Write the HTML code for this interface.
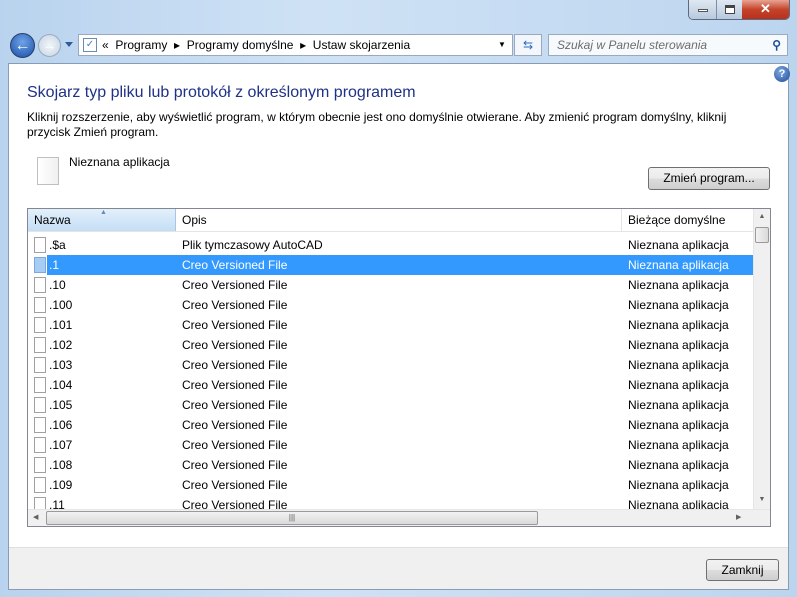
<!DOCTYPE html><html><head><meta charset="utf-8"><style>
*{margin:0;padding:0;box-sizing:border-box}
body{width:797px;height:597px;overflow:hidden;font-family:"Liberation Sans",sans-serif;font-size:12px;color:#000;background:linear-gradient(90deg,#b9d3ee,#cfe2f5 40%,#bcd5ef);position:relative}
.a{position:absolute}
.content{left:8px;top:63px;width:781px;height:527px;background:#fff;border:1px solid #8a9cb4}
.foot{left:9px;top:547px;width:779px;height:42px;background:#f0f0f0;border-top:1px solid #dfdfdf}
.btn{border:1px solid #707070;border-radius:3px;background:linear-gradient(#f2f2f2,#ebebeb 50%,#dddddd 51%,#cfcfcf);text-align:center;line-height:21px}
.row{position:absolute;left:28px;width:725px;height:20px;line-height:20px}
.row span{position:absolute}
.ic{position:absolute;left:6px;top:2px;width:12px;height:16px;border:1px solid #a0a0a0;background:#fff}
.sel{background:#3399ff;color:#fff}
</style></head><body>
<div class="a" style="left:688px;top:0;width:102px;height:20px;border:1px solid #5a6b80;border-top:none;border-radius:0 0 5px 5px;overflow:hidden;display:flex">
<div style="width:27px;background:linear-gradient(#dfe8f3,#b8c9dd)"><div style="margin:9px auto 0;width:10px;height:3px;background:#fff;border:1px solid #555"></div></div>
<div style="width:26px;background:linear-gradient(#dfe8f3,#b8c9dd);border-left:1px solid #7d8da3"><div style="margin:5px auto 0;width:10px;height:9px;border:1px solid #444;border-top-width:3px;background:#fff"></div></div>
<div style="flex:1;background:linear-gradient(#e8a493,#c4432a 50%,#b8301c);color:#fff;font-weight:bold;text-align:center;font-size:13px;line-height:18px">✕</div></div>
<div class="a" style="left:10px;top:33px;width:25px;height:25px;border-radius:50%;background:radial-gradient(circle at 50% 35%,#6ea4e8,#1a4da8);border:1px solid #2a3f6a;color:#fff;font-weight:bold;text-align:center;line-height:23px;font-size:16px">←</div>
<div class="a" style="left:38px;top:34px;width:23px;height:23px;border-radius:50%;background:radial-gradient(#f2f6fa,#c5d3e2);border:1px solid #9aaac0;color:#fff;text-align:center;line-height:21px;font-size:14px">→</div>
<div class="a" style="left:65px;top:42px;width:0;height:0;border:4px solid transparent;border-top:5px solid #2c5c9a"></div>
<div class="a" style="left:78px;top:34px;width:435px;height:22px;background:#fff;border:1px solid #9aa9bd;line-height:20px;font-size:12px">
<span class="a" style="left:4px;top:3px;width:14px;height:14px;border:1px solid #6b8bb0;color:#3a7fd0;font-size:10px;line-height:12px;text-align:center">✓</span>
<span class="a" style="left:23px">«&nbsp; Programy &nbsp;▸&nbsp; Programy domyślne &nbsp;▸&nbsp; Ustaw skojarzenia</span>
<span class="a" style="left:413px;top:0;width:20px;text-align:center;font-size:8px">▼</span></div>
<div class="a" style="left:514px;top:34px;width:28px;height:22px;background:#f3f7fb;border:1px solid #9aa9bd;color:#2a6bc2;text-align:center;line-height:20px;font-size:12px">⇆</div>
<div class="a" style="left:548px;top:34px;width:240px;height:22px;background:#f7fafd;border:1px solid #9aa9bd;line-height:20px;padding-left:8px;color:#6d6d6d;font-style:italic">Szukaj w Panelu sterowania<span class="a" style="right:6px;top:0;color:#1a4f9a;font-style:normal;font-weight:bold">⚲</span></div>
<div class="content a"></div>
<div class="a" style="left:774px;top:66px;width:16px;height:16px;border-radius:50%;background:radial-gradient(circle at 40% 35%,#7fa9e0,#1f4a98);color:#fff;font-weight:bold;font-size:11px;text-align:center;line-height:16px">?</div>
<div class="a" style="left:27px;top:84px;font-size:16px;color:#1e3287">Skojarz typ pliku lub protokół z określonym programem</div>
<div class="a" style="left:27px;top:110px;width:720px;line-height:15px;color:#000">Kliknij rozszerzenie, aby wyświetlić program, w którym obecnie jest ono domyślnie otwierane. Aby zmienić program domyślny, kliknij przycisk Zmień program.</div>
<div class="a" style="left:37px;top:157px;width:22px;height:28px;border:1px solid #c0c0c0;background:linear-gradient(90deg,#fff,#f0f0f0)"></div>
<div class="a" style="left:69px;top:155px">Nieznana aplikacja</div>
<div class="a btn" style="left:648px;top:167px;width:122px;height:23px">Zmień program...</div>
<div class="a" style="left:27px;top:208px;width:744px;height:319px;border:1px solid #828790;background:#fff;overflow:hidden">
<div class="a" style="left:0;top:0;width:725px;height:23px;border-bottom:1px solid #e5e5e5">
<div class="a" style="left:0;top:0;width:148px;height:22px;background:linear-gradient(#e3f0fb,#c4def5);border-right:1px solid #a5c7e8;padding-left:6px;line-height:22px">Nazwa</div>
<div class="a" style="left:72px;top:0;font-size:7px;color:#6a8ab0">▲</div>
<div class="a" style="left:154px;top:0;line-height:22px">Opis</div>
<div class="a" style="left:593px;top:0;height:22px;border-left:1px solid #e5e5e5"></div>
<div class="a" style="left:600px;top:0;line-height:22px">Bieżące domyślne</div></div>
<div class="a" style="left:725px;top:0;width:17px;height:300px;background:#f0f0f0;border-left:1px solid #e6e6e6">
<div style="text-align:center;font-size:7px;color:#606060;margin-top:4px">▲</div>
<div class="a" style="left:1px;top:18px;width:14px;height:16px;border:1px solid #9a9a9a;border-radius:2px;background:linear-gradient(90deg,#f2f2f2,#dadada)"></div>
<div class="a" style="top:287px;width:16px;text-align:center;font-size:7px;color:#606060">▼</div></div>
<div class="a" style="left:0;top:300px;width:742px;height:17px;background:#f0f0f0;border-top:1px solid #e6e6e6">
<div class="a" style="left:5px;top:3px;font-size:7px;color:#606060">◀</div>
<div class="a" style="left:18px;top:1px;width:492px;height:14px;border:1px solid #9a9a9a;border-radius:2px;background:linear-gradient(#f2f2f2,#dadada);text-align:center;font-size:8px;line-height:12px;color:#555">|||</div>
<div class="a" style="left:708px;top:3px;font-size:7px;color:#606060">▶</div></div>
</div>
<div class="a" style="left:0;top:0;width:797px">
<div class="row" style="top:235px"><span class="ic"></span><span style="left:21px">.$a</span><span style="left:154px">Plik tymczasowy AutoCAD</span><span style="left:600px">Nieznana aplikacja</span></div>
<div class="row" style="top:255px"><span class="ic" style="background:#a8cdf5;border-color:#7fa8d8"></span><span class="sel" style="left:19px;width:706px;height:20px"></span><span style="left:21px;color:#fff">.1</span><span style="left:154px;color:#fff">Creo Versioned File</span><span style="left:600px;color:#fff">Nieznana aplikacja</span></div>
<div class="row" style="top:275px"><span class="ic"></span><span style="left:21px">.10</span><span style="left:154px">Creo Versioned File</span><span style="left:600px">Nieznana aplikacja</span></div>
<div class="row" style="top:295px"><span class="ic"></span><span style="left:21px">.100</span><span style="left:154px">Creo Versioned File</span><span style="left:600px">Nieznana aplikacja</span></div>
<div class="row" style="top:315px"><span class="ic"></span><span style="left:21px">.101</span><span style="left:154px">Creo Versioned File</span><span style="left:600px">Nieznana aplikacja</span></div>
<div class="row" style="top:335px"><span class="ic"></span><span style="left:21px">.102</span><span style="left:154px">Creo Versioned File</span><span style="left:600px">Nieznana aplikacja</span></div>
<div class="row" style="top:355px"><span class="ic"></span><span style="left:21px">.103</span><span style="left:154px">Creo Versioned File</span><span style="left:600px">Nieznana aplikacja</span></div>
<div class="row" style="top:375px"><span class="ic"></span><span style="left:21px">.104</span><span style="left:154px">Creo Versioned File</span><span style="left:600px">Nieznana aplikacja</span></div>
<div class="row" style="top:395px"><span class="ic"></span><span style="left:21px">.105</span><span style="left:154px">Creo Versioned File</span><span style="left:600px">Nieznana aplikacja</span></div>
<div class="row" style="top:415px"><span class="ic"></span><span style="left:21px">.106</span><span style="left:154px">Creo Versioned File</span><span style="left:600px">Nieznana aplikacja</span></div>
<div class="row" style="top:435px"><span class="ic"></span><span style="left:21px">.107</span><span style="left:154px">Creo Versioned File</span><span style="left:600px">Nieznana aplikacja</span></div>
<div class="row" style="top:455px"><span class="ic"></span><span style="left:21px">.108</span><span style="left:154px">Creo Versioned File</span><span style="left:600px">Nieznana aplikacja</span></div>
<div class="row" style="top:475px"><span class="ic"></span><span style="left:21px">.109</span><span style="left:154px">Creo Versioned File</span><span style="left:600px">Nieznana aplikacja</span></div>
<div class="row" style="top:495px;height:14px;overflow:hidden"><span class="ic"></span><span style="left:21px">.11</span><span style="left:154px">Creo Versioned File</span><span style="left:600px">Nieznana aplikacja</span></div>
</div>
<div class="foot a"></div>
<div class="a btn" style="left:706px;top:559px;width:73px;height:22px">Zamknij</div>
</body></html>
